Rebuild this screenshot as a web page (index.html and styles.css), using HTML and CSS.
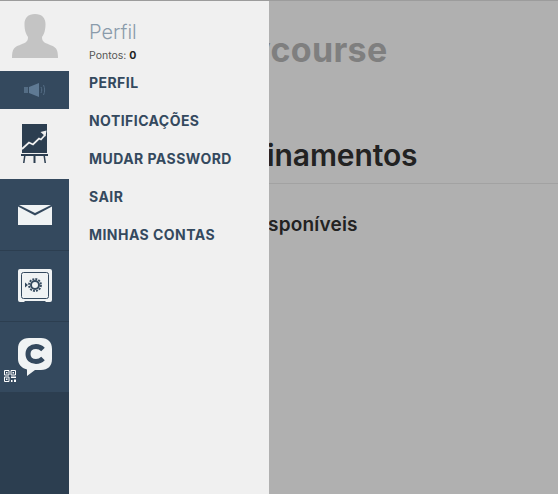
FILE: index.html
```html
<!DOCTYPE html>
<html lang="pt">
<head>
<meta charset="utf-8">
<title>Perfil</title>
<link rel="stylesheet" href="styles.css">
</head>
<body>
<main class="page">
  <h1 class="brand">Mycourse</h1>
  <h2 class="section">Treinamentos</h2>
  <h3 class="sub">Cursos disponíveis</h3>
</main>
<aside class="drawer">
  <nav class="rail">
    <div class="avatar">
      <svg width="46" height="44" viewBox="0 0 46 44"><path fill="#c4c4c4" d="M23 0c7 0 10.500 4 10.500 10 0 3-.3 5.500-1 8-.7 2-1.500 3.500-2.500 5 0 2.500.5 4 2.500 5.500 3.500 2 9 3 11.500 6 1.500 2 2 5 2 9.500H0c0-4.500.5-7.500 2-9.500 2.500-3 8-4 11.500-6 2-1.500 2.500-3 2.500-5.500-1-1.500-1.800-3-2.500-5-.7-2.500-1-5-1-8C12.500 4 16 0 23 0z"/></svg>
    </div>
    <div class="sound">
      <svg width="22" height="14" viewBox="0 0 22 14"><path fill="#546d85" d="M0 4h4v6H0z"/><path fill="#5f7a94" d="M5 4l10-4v14L5 10z"/><path fill="none" stroke="#546d85" d="M17 4c1 2 1 4 0 6M19.500 2c1.500 3 1.500 7 0 10"/></svg>
    </div>
    <div class="tile tile-on">
      <svg width="27" height="40" viewBox="0 0 27 40"><path fill="#2c3e50" d="M1 0h25v29H1z"/><path fill="none" stroke="#f0f0f0" stroke-width="1.800" d="M1 25l7-6.500 4 2 6-6 2 1 4-4.500"/><path fill="#f0f0f0" d="M19.500 8l6-1.500-1 6z"/><path fill="#2c3e50" d="M0 30h27v2H0zM3 32h1.500l-1 7H2zM12.500 32h2v7h-2zM22.500 32H24l1 7h-1.500z"/></svg>
    </div>
    <div class="tile">
      <svg width="34" height="20" viewBox="0 0 34 20"><path fill="#f0f3f4" d="M0 1.500l17 9 17-9V20H0z"/><path fill="#f0f3f4" d="M1 0h32L17 8z"/></svg>
    </div>
    <div class="tile tile-line">
      <svg width="34" height="34" viewBox="0 0 34 34"><path fill="#f0f3f4" d="M2 0h30a2 2 0 0 1 2 2v29a2 2 0 0 1-2 2h-4l-1-1H7l-1 1H2a2 2 0 0 1-2-2V2a2 2 0 0 1 2-2z"/><rect x="3.500" y="3.500" width="27" height="26" rx="2" fill="none" stroke="#34495e" stroke-width="1"/><circle cx="17" cy="16" r="4" fill="none" stroke="#34495e" stroke-width="2"/><circle cx="17" cy="16" r="6" fill="none" stroke="#34495e" stroke-width="1.800" stroke-dasharray="2 1.100"/><path fill="#34495e" d="M7 13.500l3 2.500-3 2.500z"/></svg>
    </div>
    <div class="tile tile-line tile-qr">
      <svg width="34" height="38" viewBox="0 0 34 38"><path fill="#f0f3f4" d="M11 0h12c7 0 11 4 11 11v10c0 7-4 11-11 11H17l-8 6 0-6.500C3 30 0 26 0 21V11C0 4 4 0 11 0z"/><path fill="none" stroke="#34495e" stroke-width="5" d="M25 11.500c-2-2-4-3-7-3-5 0-8 3-8 7.500s3 7.500 8 7.500c3 0 5-1 7-3"/></svg>
      <svg class="qr" width="12" height="12" viewBox="0 0 12 12"><path fill="none" stroke="#fff" d="M.5.500h4.500v4.500H.5zM7 .5h4.500v4.500H7zM.5 7h4.500v4.500H.5z"/><path fill="#fff" d="M2 2h1.500v1.500H2zM8.500 2H10v1.500H8.500zM2 8.500h1.500V10H2zM7 6.500h5V8H7zM7 10h1.500v2H7zM10 9.500h2V12h-2z"/></svg>
    </div>
    <div class="rail-rest"></div>
  </nav>
  <section class="menu">
    <p class="menu-title">Perfil</p>
    <p class="points">Pontos: <b>0</b></p>
    <ul class="links">
      <li>PERFIL</li>
      <li>NOTIFICAÇÕES</li>
      <li>MUDAR PASSWORD</li>
      <li>SAIR</li>
      <li>MINHAS CONTAS</li>
    </ul>
  </section>
</aside>
</body>
</html>
```
FILE: styles.css
```css
* { box-sizing: border-box; }
html, body { margin: 0; height: 100%; }
body { background: #b0b0b0; border-top: 1px solid #9c9c9c; font-family: Inter, "Open Sans", sans-serif; overflow: hidden; position: relative; }
.page { padding-top: 28px; color: #222; }
.brand { margin: 0; padding-left: 218px; font-size: 34px; line-height: 42px; font-weight: 700; color: #7f7f7f; letter-spacing: .3px; }
.section { margin: 66px 0 0; padding: 0 0 10px 220px; font-size: 30px; line-height: 36px; font-weight: 600; letter-spacing: -.1px; border-bottom: 1px solid #a2a2a2; }
.sub { margin: 29px 0 0; padding-left: 179px; font-size: 19px; line-height: 24px; font-weight: 600; letter-spacing: .2px; }
.drawer { position: absolute; top: 0; left: 0; bottom: 0; width: 269px; display: flex; background: #f0f0f0; }
.rail { width: 69px; display: flex; flex-direction: column; flex: none; }
.avatar { height: 70px; display: flex; justify-content: center; padding-top: 13px; }
.sound { height: 38px; background: #34495e; display: flex; align-items: center; justify-content: center; }
.tile { height: 71px; background: #34495e; display: flex; align-items: center; justify-content: center; position: relative; flex: none; }
.tile-on { height: 70px; background: #f0f0f0; }
.tile-line { border-top: 1px solid #2c3e50; }
.qr { position: absolute; left: 4px; bottom: 10px; }
.rail-rest { flex: 1; background: #2c3e50; }
.menu { flex: 1; padding: 19px 0 0 20px; color: #34495e; }
.menu-title { margin: 0; font-size: 20px; line-height: 24px; font-weight: 300; color: #8a9bab; }
.points { margin: 5px 0 8px; font-size: 10.500px; line-height: 14px; color: #555; }
.points b { color: #222; }
.links { list-style: none; margin: 0; padding: 0; }
.links li { height: 38px; line-height: 16px; padding-top: 4px; font-size: 14px; font-weight: 700; letter-spacing: .45px; color: #34495e; }
```
